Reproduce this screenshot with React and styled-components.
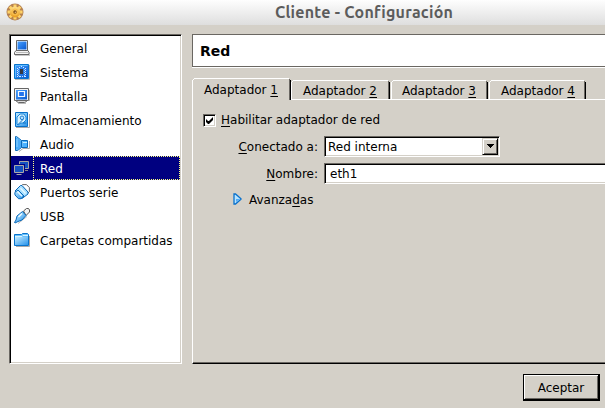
import React from 'react';
import styled, { createGlobalStyle, css } from 'styled-components';

const face = '#d4d0c8';
const shade = '#6a6762';

const GlobalStyle = createGlobalStyle`
  * { box-sizing: border-box; }
  body { margin: 0; overflow: hidden; background: ${face}; }
  u {
    text-decoration: underline;
    text-decoration-thickness: 1px;
    text-underline-offset: 2px;
    text-decoration-skip-ink: none;
  }
`;

const sunken = css`
  background: #fff;
  border: 1px solid;
  border-color: ${shade} #fff #fff ${shade};
  box-shadow: inset 1px 1px 0 #000, inset -1px -1px 0 ${face};
`;

const Window = styled.div`
  width: 605px;
  height: 408px;
  overflow: hidden;
  display: flex;
  flex-direction: column;
  background: ${face};
  color: #000;
  font: 12px/16px "DejaVu Sans", sans-serif;
  white-space: nowrap;
`;

const TitleBar = styled.header`
  height: 25px;
  flex: none;
  display: flex;
  align-items: flex-start;
  background: linear-gradient(#fefefe, #dedede);
  svg { margin: 3px 0 0 6px; flex: none; }
`;

const Title = styled.h1`
  margin: 2px 0 0 251px;
  font: bold 16px/20px Ubuntu, "Noto Sans", sans-serif;
  letter-spacing: 0.25px;
  color: #5c5c5c;
`;

const Body = styled.div`
  display: flex;
  gap: 10px;
  height: 330px;
  margin: 9px 0 0 9px;
`;

const Categories = styled.ul`
  ${sunken}
  width: 173px;
  flex: none;
  margin: 0;
  padding: 1px;
  list-style: none;
`;

const Category = styled.li`
  display: flex;
  height: 24px;
  padding-left: 3px;
  align-items: center;
  background: ${p => (p.$selected ? '#000080' : 'transparent')};
  color: ${p => (p.$selected ? '#fff' : '#000')};
  svg { flex: none; }
`;

const CategoryName = styled.span`
  flex: 1;
  height: 24px;
  margin-left: 3px;
  padding: 4px 0 0 6px;
  border: 1px dotted ${p => (p.$selected ? '#ffff80' : 'transparent')};
`;

const Settings = styled.main`
  flex: 1;
  min-width: 0;
  display: flex;
  flex-direction: column;
`;

const PageHeading = styled.h2`
  height: 33px;
  flex: none;
  margin: 0;
  padding: 8px 0 0 7px;
  background: #fff;
  border: solid ${shade};
  border-width: 1px 0 1px 1px;
  box-shadow: 0 1px 0 #fff;
  font: bold 14px/16px "DejaVu Sans", sans-serif;
`;

const Tabs = styled.nav`
  display: flex;
  align-items: flex-end;
  height: 21px;
  margin-top: 11px;
  position: relative;
`;

const Tab = styled.div`
  height: ${p => (p.$active ? 22 : 19)}px;
  width: ${p => p.$width}px;
  margin-bottom: ${p => (p.$active ? -1 : 0)}px;
  padding: ${p => (p.$active ? 4 : 3)}px 0 0 ${p => p.$indent}px;
  margin-right: ${p => (p.$active ? 0 : 1)}px;
  background: linear-gradient(#000, #000) right 0 top 2px / 1px calc(100% - 2px) no-repeat,
    linear-gradient(${shade}, ${shade}) right 1px top 1px / 1px calc(100% - 1px) no-repeat,
    linear-gradient(#fff, #fff) left 2px top 0 / calc(100% - 4px) 1px no-repeat,
    linear-gradient(#fff, #fff) left 1px top 1px / 1px 1px no-repeat,
    linear-gradient(#fff, #fff) left 0 top 2px / 1px calc(100% - 2px) no-repeat,
    ${face};
`;

const Panel = styled.section`
  flex: 1;
  padding: 12px 0 0 10px;
  border: solid;
  border-width: 1px 0 1px 1px;
  border-color: #fff #fff #000 #fff;
  box-shadow: inset 0 -1px 0 ${shade};
`;

const EnableRow = styled.label`
  display: flex;
  align-items: center;
  height: 16px;
  gap: 5px;
`;

const CheckBox = styled.span`
  ${sunken}
  width: 13px;
  height: 13px;
  display: flex;
  svg { margin: 2px; flex: none; }
`;

const Form = styled.div`
  display: grid;
  grid-template-columns: 115px 1fr;
  grid-template-rows: 21px 21px;
  column-gap: 6px;
  row-gap: 6px;
  margin-top: 8px;
`;

const Label = styled.span`
  text-align: right;
  padding-top: 3px;
`;

const ComboBox = styled.div`
  ${sunken}
  width: 176px;
  padding: 1px;
  display: flex;
`;

const ComboText = styled.span`
  flex: 1;
  padding: 1px 0 0 2px;
`;

const ComboButton = styled.span`
  width: 16px;
  height: 17px;
  display: flex;
  justify-content: center;
  padding-top: 5px;
  background: ${face};
  border: 1px solid;
  border-color: ${face} #000 #000 ${face};
  box-shadow: inset 1px 1px 0 #fff, inset -1px -1px 0 ${shade};
`;

const TextField = styled.div`
  ${sunken}
  border-right: 0;
  box-shadow: inset 1px 1px 0 #000, inset 0 -1px 0 ${face};
  padding: 2px 0 0 5px;
`;

const Advanced = styled.div`
  display: flex;
  align-items: center;
  gap: 7px;
  margin: 8px 0 0 30px;
  svg { margin-top: -2px; }
`;

const Footer = styled.footer`
  display: flex;
  justify-content: flex-end;
  padding: 10px 5px 0 0;
`;

const Button = styled.button`
  width: 77px;
  height: 27px;
  padding: 1px 0 0;
  border: solid #000;
  border-width: 1px 2px 2px 1px;
  background: ${face};
  box-shadow: inset 1px 1px 0 #fff, inset -1px -1px 0 ${shade};
  color: #000;
  font: 12px/16px "DejaVu Sans", sans-serif;
`;

const Gear = () => (
  <svg width="18" height="18" viewBox="0 0 18 18">
    <defs>
      <linearGradient id="gold" x1="0" y1="0" x2="0" y2="1">
        <stop offset="0" stopColor="#ffe08a" /><stop offset="1" stopColor="#e89a1c" />
      </linearGradient>
    </defs>
    <circle cx="9" cy="9" r="8.5" fill="#a8662a" opacity=".8" />
    <g stroke="#ffd468" strokeWidth="3">
      <path d="M9 1.5v15M1.5 9h15M3.7 3.7l10.6 10.6M14.3 3.7L3.7 14.3" />
    </g>
    <circle cx="9" cy="9" r="5.4" fill="url(#gold)" />
    <circle cx="9" cy="9" r="3" fill="none" stroke="#f8be4c" />
    <circle cx="9" cy="9" r="1.7" fill="#7a4710" />
    <circle cx="9.3" cy="9.3" r=".7" fill="#e8c890" />
  </svg>
);

const Icon = ({ children }) => (
  <svg width="16" height="16" viewBox="0 0 16 16">
    <defs>
      <linearGradient id="screen" x1="0" y1="0" x2="1" y2="1">
        <stop offset="0" stopColor="#48a0ff" /><stop offset="1" stopColor="#0858d0" />
      </linearGradient>
      <linearGradient id="sky" x1="0" y1="0" x2="1" y2="1">
        <stop offset="0" stopColor="#c4ecff" /><stop offset="1" stopColor="#2894ec" />
      </linearGradient>
    </defs>
    {children}
  </svg>
);

const GeneralIcon = () => (
  <Icon>
    <path d="M1 15.5h15V12" stroke="#c8c8c8" fill="none" />
    <path d="M2.5.5h11v10h-11z" fill="#fff" stroke="#666" />
    <path d="M3.5 1.5h9v8h-9z" fill="url(#screen)" />
    <path d="M2 10.5h12l1 2v2H.5v-2z" fill="#f2f2f2" stroke="#666" />
    <path d="M2 12.5h12" stroke="#bbb" />
  </Icon>
);
const SystemIcon = () => (
  <Icon>
    <path d="M1 15.5h14.5V1" fill="none" stroke="#bbb" />
    <path d="M.5.5h14v14H.5z" fill="url(#screen)" stroke="#0874cc" />
    <path d="M1.5 13.5v-12h12" fill="none" stroke="#60baff" />
    <path d="M6 5h3v5H6z" fill="#343840" />
    <path d="M3.5 4v9M11.5 4v8" stroke="#d8f0ff" strokeDasharray="1 1" />
    <path d="M4.5 5v7M10.5 5v7" stroke="#90ccff" strokeDasharray="1 1" />
    <path d="M5 3.5h1M7 2.5h1M9 3.5h1M5 12.5h2M8 12.5h1M10 12.5h2" stroke="#d0ecff" />
  </Icon>
);
const DisplayIcon = () => (
  <Icon>
    <path d="M4 15.5h8M15.5 2v11" stroke="#bbb" />
    <path d="M.5.5h14v12H.5z" fill="#f4f4f4" stroke="#666" />
    <path d="M2 2h11v9.5H2z" fill="url(#screen)" />
    <path d="M4.5 3.5h6v5h-6z" fill="#2474ee" stroke="#f4faff" strokeWidth="1.2" />
    <path d="M2.5 12.5h10v1l-2 1h-6l-2-1z" fill="#ddd" stroke="#666" />
  </Icon>
);
const StorageIcon = () => (
  <Icon>
    <path d="M2 15.5h13.5V2" fill="none" stroke="#aaa" />
    <path d="M1.5.5h12v14h-12z" fill="url(#sky)" stroke="#0870c8" />
    <path d="M3 12V5l3-3h4l2 3v3L9 11H7l-3 2z" fill="#d8f2ff" stroke="#1886dc" />
    <circle cx="8" cy="5.8" r="1.8" fill="#bde3ff" stroke="#187cd0" />
    <path d="M4 12.5l5-5M9 11h3" stroke="#1470c0" />
  </Icon>
);
const AudioIcon = () => (
  <Icon>
    <path d="M5 15.5l4-3h6.5V5" fill="none" stroke="#aaa" />
    <path d="M1.5.5h1l5 4h6v7h-6l-4 3h-2z" fill="url(#sky)" stroke="#0868b8" />
    <path d="M7 5v6l-3 3-2-1V1z" fill="#48aaf8" />
    <path d="M3 3v8" stroke="#90d4ff" />
    <path d="M7.5 4.5v7" stroke="#0868b8" />
    <path d="M9 5h4v6H9z" fill="#48b0ff" /><path d="M9 6.5h4" stroke="#c8f0ff" />
  </Icon>
);
const NetworkIcon = () => (
  <Icon>
    <path d="M5.5.5h9v7h-9z" fill="#1450c0" stroke="#a4a4a4" transform="translate(0 1)" />
    <path d="M10 10.5h4" stroke="#888" />
    <path d="M.5 5.5h9v7h-9z" fill="#1450c0" stroke="#000080" strokeWidth="3" />
    <path d="M.5 5.5h9v7h-9z" fill="#1450c0" stroke="#aaa" />
    <path d="M2.5 14.5h5" stroke="#aaa" />
  </Icon>
);
const SerialIcon = () => (
  <Icon>
    <path d="M7.5 1.5l1-.9h4l2.9 3v4l-1.5 1.5z" fill="#fff" stroke="#555" strokeWidth=".9" />
    <path d="M1 7l5.5-5.5h1.5L14 8v2L8 14.5 6 13z" fill="#a8e0ff" stroke="#0868b8" />
    <path d="M.8 8.5L4 6l6 6-3 2.7H4.5L1 11z" fill="url(#sky)" stroke="#0868b8" />
    <path d="M3.5 7.5l4.5 4.7M6.5 4.2l5 5.2" stroke="#e8faff" strokeWidth="1.4" />
  </Icon>
);
const UsbIcon = () => (
  <Icon>
    <path d="M4 15.5l9-7" stroke="#bbb" fill="none" />
    <path d="M9.5 3l3-2.5h2L15.5 2v2L12 7.5z" fill="#f4f4f4" stroke="#555" />
    <path d="M8.5 3.5L12 7.5 8 12l-4 1.5L1 15l-.5-.5L2 12l1-4z" fill="url(#sky)" stroke="#0868b8" />
    <path d="M4.5 9L8 5.5" stroke="#ecfaff" strokeWidth="1.6" />
  </Icon>
);
const FolderIcon = () => (
  <Icon>
    <path d="M2 14.5h13.5V4" fill="none" stroke="#aaa" />
    <path d="M.5 2.5h7l1-1h5l1 1v11H.5z" fill="#68c0fc" stroke="#0874cc" />
    <path d="M1 5h13v8H1z" fill="url(#sky)" />
    <path d="M1 4.5h7l1-1h5" fill="none" stroke="#d8f4ff" />
  </Icon>
);

const categories = [
  ['General', GeneralIcon],
  ['Sistema', SystemIcon],
  ['Pantalla', DisplayIcon],
  ['Almacenamiento', StorageIcon],
  ['Audio', AudioIcon],
  ['Red', NetworkIcon],
  ['Puertos serie', SerialIcon],
  ['USB', UsbIcon],
  ['Carpetas compartidas', FolderIcon],
];

const tabs = [
  { width: 99, indent: 12 },
  { width: 99, indent: 12 },
  { width: 97, indent: 11 },
  { width: 97, indent: 12 },
];

export default function App() {
  return (
    <Window>
      <GlobalStyle />
      <TitleBar>
        <Gear />
        <Title>Cliente - Configuración</Title>
      </TitleBar>
      <Body>
        <Categories>
          {categories.map(([name, Glyph]) => (
            <Category key={name} $selected={name === 'Red'}>
              <Glyph />
              <CategoryName $selected={name === 'Red'}>{name}</CategoryName>
            </Category>
          ))}
        </Categories>
        <Settings>
          <PageHeading>Red</PageHeading>
          <Tabs>
            {tabs.map(({ width, indent }, i) => (
              <Tab key={i} $width={width} $indent={indent} $active={i === 0}>
                Adaptador <u>{i + 1}</u>
              </Tab>
            ))}
          </Tabs>
          <Panel>
            <EnableRow>
              <CheckBox>
                <svg width="7" height="7" viewBox="0 0 7 7">
                  <path d="M0 2v3l2 2h1l4-4V0L3 4H2z" fill="#000" />
                </svg>
              </CheckBox>
              <span><u>H</u>abilitar adaptador de red</span>
            </EnableRow>
            <Form>
              <Label><u>C</u>onectado a:</Label>
              <ComboBox>
                <ComboText>Red interna</ComboText>
                <ComboButton>
                  <svg width="7" height="4" viewBox="0 0 7 4" shapeRendering="crispEdges">
                    <path d="M0 0h7v1H6v1H5v1H4v1H3V3H2V2H1V1H0z" />
                  </svg>
                </ComboButton>
              </ComboBox>
              <Label><u>N</u>ombre:</Label>
              <TextField>eth1</TextField>
            </Form>
            <Advanced>
              <svg width="9" height="12" viewBox="0 0 9 12">
                <path d="M1 1h1.5L8 5.7v.6L2.5 11H1z" fill="#b8e4ff" stroke="#0870cc" strokeWidth="1.3" />
                <path d="M3 9V6h4z" fill="#50acf8" />
              </svg>
              <span>Avanza<u>d</u>as</span>
            </Advanced>
          </Panel>
        </Settings>
      </Body>
      <Footer>
        <Button>Aceptar</Button>
      </Footer>
    </Window>
  );
}
